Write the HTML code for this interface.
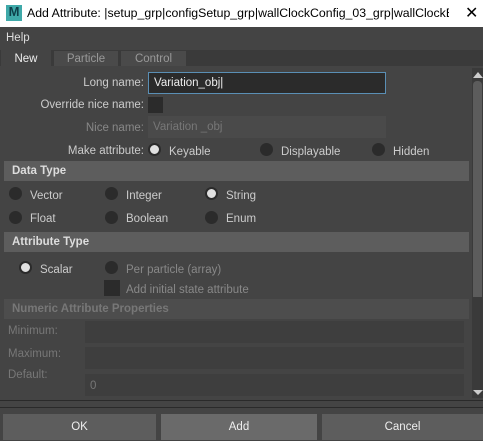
<!DOCTYPE html>
<html><head><style>
*{margin:0;padding:0;box-sizing:border-box}
body{width:483px;height:440px;background:#444;font-family:"Liberation Sans",sans-serif;font-size:11.5px;color:#ccc;position:relative;overflow:hidden}
.a{position:absolute;white-space:nowrap}
.r{position:absolute;width:13px;height:13px;border-radius:50%;background:#2b2b2b}
.r.on{background:#e0e0e0;border:2px solid #2b2b2b}
.hd{position:absolute;left:4px;width:465px;height:20px;background:#5d5d5d;font-weight:bold;color:#ddd;padding:4px 0 0 8px}
.btn{position:absolute;top:414px;height:26px;background:#5d5d5d;color:#eee;text-align:center;line-height:27px}
</style></head><body>
<div class="a" style="left:0;top:0;width:483px;height:27px;background:#fff"></div>
<div class="a" style="left:6px;top:5px;width:16px;height:16px;background:#3fa9a9;color:#0d3f4a;font-weight:bold;font-size:13px;line-height:14px;text-align:center">M</div>
<div class="a" style="left:27px;top:6px;width:422px;overflow:hidden;color:#000;font-size:12.3px">Add Attribute: |setup_grp|configSetup_grp|wallClockConfig_03_grp|wallClockB...</div>
<div class="a" style="left:465px;top:3px;color:#000;font-size:16px">✕</div>
<div class="a" style="left:6px;top:32px;color:#ddd">Help</div>
<div class="a" style="left:0;top:50px;width:483px;height:16px;background:#3a3a3a"></div>
<div class="a" style="left:1px;top:50px;width:50px;height:18px;background:#444;color:#eee;text-align:center;padding-top:3px">New</div>
<div class="a" style="left:54px;top:51px;width:64px;height:15px;background:#4a4a4a;color:#999;text-align:center;padding-top:2px">Particle</div>
<div class="a" style="left:121px;top:51px;width:65px;height:15px;background:#4a4a4a;color:#999;text-align:center;padding-top:2px">Control</div>
<div class="a" style="left:472px;top:68px;width:11px;height:330px;background:#3a3a3a"></div>
<div class="a" style="left:473px;top:72px;width:0;height:0;border-left:5px solid transparent;border-right:5px solid transparent;border-bottom:6px solid #ccc"></div>
<div class="a" style="left:473px;top:81px;width:9px;height:216px;background:#5c5c5c;border-radius:4px 4px 0 0"></div>
<div class="a" style="left:473px;top:390px;width:0;height:0;border-left:5px solid transparent;border-right:5px solid transparent;border-top:5px solid #ccc"></div>

<div class="a" style="left:40px;top:77px;width:104px;text-align:right">Long name:</div>
<div class="a" style="left:148px;top:72px;width:238px;height:22px;background:#2b2b2b;border:1px solid #5a8fb5;color:#eee;padding:4px 0 0 5px">Variation_obj|</div>
<div class="a" style="left:20px;top:99px;width:124px;text-align:right">Override nice name:</div>
<div class="a" style="left:148px;top:97px;width:15px;height:16px;background:#2b2b2b"></div>
<div class="a" style="left:40px;top:122px;width:104px;text-align:right;color:#888">Nice name:</div>
<div class="a" style="left:148px;top:116px;width:238px;height:22px;background:#4a4a4a;color:#777;padding:5px 0 0 5px">Variation _obj</div>
<div class="a" style="left:40px;top:145px;width:104px;text-align:right">Make attribute:</div>
<div class="r on" style="left:148px;top:143px"></div><div class="a" style="left:169px;top:146px">Keyable</div>
<div class="r" style="left:260px;top:143px"></div><div class="a" style="left:281px;top:146px">Displayable</div>
<div class="r" style="left:372px;top:143px"></div><div class="a" style="left:393px;top:146px">Hidden</div>

<div class="hd" style="top:161px">Data Type</div>
<div class="r" style="left:9px;top:187px"></div><div class="a" style="left:30px;top:190px">Vector</div>
<div class="r" style="left:105px;top:187px"></div><div class="a" style="left:126px;top:190px">Integer</div>
<div class="r on" style="left:205px;top:187px"></div><div class="a" style="left:226px;top:190px">String</div>
<div class="r" style="left:9px;top:211px"></div><div class="a" style="left:30px;top:213px">Float</div>
<div class="r" style="left:105px;top:211px"></div><div class="a" style="left:126px;top:213px">Boolean</div>
<div class="r" style="left:205px;top:211px"></div><div class="a" style="left:226px;top:213px">Enum</div>

<div class="hd" style="top:232px">Attribute Type</div>
<div class="r on" style="left:19px;top:261px"></div><div class="a" style="left:40px;top:264px">Scalar</div>
<div class="r" style="left:105px;top:261px"></div><div class="a" style="left:126px;top:264px;color:#888">Per particle (array)</div>
<div class="a" style="left:104px;top:280px;width:16px;height:16px;background:#2b2b2b"></div>
<div class="a" style="left:126px;top:284px;color:#888">Add initial state attribute</div>

<div class="hd" style="top:299px;color:#777;background:#4d4d4d">Numeric Attribute Properties</div>
<div class="a" style="left:8px;top:325px;color:#777">Minimum:</div>
<div class="a" style="left:85px;top:321px;width:379px;height:22px;background:#3e3e3e"></div>
<div class="a" style="left:8px;top:348px;color:#777">Maximum:</div>
<div class="a" style="left:85px;top:347px;width:379px;height:22px;background:#3e3e3e"></div>
<div class="a" style="left:8px;top:369px;color:#777">Default:</div>
<div class="a" style="left:85px;top:374px;width:379px;height:22px;background:#3e3e3e;color:#777;padding:6px 0 0 5px">0</div>

<div class="a" style="left:0;top:400px;width:483px;height:1px;background:#2a2a2a"></div>
<div class="a" style="left:0;top:407px;width:483px;height:1px;background:#2a2a2a"></div>
<div class="btn" style="left:3px;width:153px">OK</div>
<div class="btn" style="left:161px;width:156px;background:#6a6a6a">Add</div>
<div class="btn" style="left:322px;width:161px">Cancel</div>
</body></html>
